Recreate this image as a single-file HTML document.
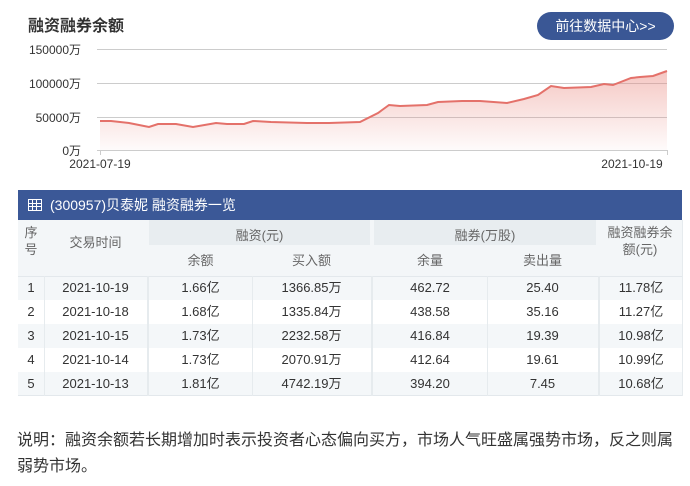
<!DOCTYPE html>
<html><head><meta charset="utf-8"><style>
*{margin:0;padding:0;box-sizing:border-box}
body{width:690px;height:486px;background:#fff;font-family:"Liberation Sans","Noto Sans CJK SC",sans-serif;color:#333;position:relative;overflow:hidden}
.title{position:absolute;left:28px;top:12px;font-size:16px;font-weight:bold;color:#333}
.btn{position:absolute;left:537px;top:12px;width:137px;height:28px;border-radius:14px;background:#3a5795;color:#fff;font-size:14px;line-height:28px;text-align:center}
svg{position:absolute;left:0;top:0}
.bar{position:absolute;left:18px;top:190px;width:664px;height:30px;background:#3b5897;color:#fff;font-size:14px;line-height:30px;padding-left:32px}
.ico{position:absolute;left:10px;top:9px;width:14px;height:12px;border:1.5px solid #fff;background:
linear-gradient(#fff,#fff) 0 3px/100% 1px no-repeat,linear-gradient(#fff,#fff) 0 6px/100% 1px no-repeat,
linear-gradient(#fff,#fff) 3px 0/1px 100% no-repeat,linear-gradient(#fff,#fff) 7px 0/1px 100% no-repeat}
.c{position:absolute;font-size:13px;text-align:center;color:#333}
.h{color:#666}
</style></head><body>
<div class="title">融资融券余额</div>
<div class="btn">前往数据中心&gt;&gt;</div>
<svg width="690" height="186">
<defs><linearGradient id="g" x1="0" y1="0" x2="0" y2="1"><stop offset="0" stop-color="#e8837a" stop-opacity=".45"/><stop offset="1" stop-color="#e8837a" stop-opacity=".03"/></linearGradient></defs>
<g stroke="#ccc" stroke-width="1"><line x1="97" y1="49.5" x2="667" y2="49.5"/><line x1="97" y1="83.5" x2="667" y2="83.5"/><line x1="97" y1="117.5" x2="667" y2="117.5"/><line x1="97" y1="150.5" x2="667" y2="150.5"/>
<line x1="100.5" y1="150" x2="100.5" y2="155"/><line x1="667.5" y1="150" x2="667.5" y2="155"/></g>
<g font-size="12" fill="#333" text-anchor="end"><text x="81" y="54">150000万</text><text x="81" y="88">100000万</text><text x="81" y="122">50000万</text><text x="81" y="155">0万</text></g>
<g font-size="12" fill="#333" text-anchor="middle"><text x="100" y="168">2021-07-19</text><text x="632" y="168">2021-10-19</text></g>
<path d="M100,121 L111,121 129,123 149,127 158,124 176,124 193,127 216,123 227,124 244,124 253,121 271,122 307,123 329,123 360,122 378,113 389,105 400,106 427,105 438,102 462,101 480,101 507,103 524,99 538,95 551,86 564,88 591,87 604,84 613,85 631,78 640,77 653,76 667,71 L667,150 L100,150Z" fill="url(#g)"/>
<path d="M100,121 L111,121 129,123 149,127 158,124 176,124 193,127 216,123 227,124 244,124 253,121 271,122 307,123 329,123 360,122 378,113 389,105 400,106 427,105 438,102 462,101 480,101 507,103 524,99 538,95 551,86 564,88 591,87 604,84 613,85 631,78 640,77 653,76 667,71" fill="none" stroke="#e4716a" stroke-width="2"/>
</svg>
<div class="bar"><span class="ico"></span>(300957)贝泰妮 融资融券一览</div>
<div style="position:absolute;left:18px;top:220px;width:664px;height:56px;background:#f3f6f8"></div>
<div style="position:absolute;left:149px;top:220px;width:221px;height:25px;background:#e8edf0"></div>
<div style="position:absolute;left:374px;top:220px;width:222px;height:25px;background:#e8edf0"></div>
<div style="position:absolute;left:18px;top:276px;width:664px;height:24px;background:#f4f7f9"></div>
<div style="position:absolute;left:18px;top:324px;width:664px;height:24px;background:#f4f7f9"></div>
<div style="position:absolute;left:18px;top:372px;width:664px;height:24px;background:#f4f7f9"></div>
<div style="position:absolute;left:18px;top:276px;width:664px;height:1px;background:#e3e8ec"></div>
<div style="position:absolute;left:18px;top:395px;width:664px;height:1px;background:#e3e8ec"></div>
<div style="position:absolute;left:44px;top:276px;width:1px;height:120px;background:#e6ebee"></div>
<div style="position:absolute;left:147px;top:276px;width:2px;height:120px;background:#e6ebee"></div>
<div style="position:absolute;left:252px;top:276px;width:1px;height:120px;background:#e6ebee"></div>
<div style="position:absolute;left:371px;top:276px;width:2px;height:120px;background:#e6ebee"></div>
<div style="position:absolute;left:487px;top:276px;width:1px;height:120px;background:#e6ebee"></div>
<div style="position:absolute;left:598px;top:276px;width:2px;height:120px;background:#e6ebee"></div>
<div style="position:absolute;left:682px;top:220px;width:1px;height:176px;background:#e6ebee"></div>
<div class="c h" style="left:18px;top:224px;width:26px;line-height:17px">序<br>号</div>
<div class="c h" style="left:44px;top:232px;width:103px">交易时间</div>
<div class="c h" style="left:149px;top:225px;width:221px">融资(元)</div>
<div class="c h" style="left:374px;top:225px;width:222px">融券(万股)</div>
<div class="c h" style="left:598px;top:224px;width:84px;line-height:17px">融资融券余<br>额(元)</div>
<div class="c h" style="left:149px;top:250px;width:103px">余额</div>
<div class="c h" style="left:252px;top:250px;width:119px">买入额</div>
<div class="c h" style="left:373px;top:250px;width:114px">余量</div>
<div class="c h" style="left:487px;top:250px;width:111px">卖出量</div>
<div style="position:absolute;left:17px;top:428px;width:690px;font-size:16px;line-height:26px;letter-spacing:0;color:#333;white-space:nowrap">说明：融资余额若长期增加时表示投资者心态偏向买方，市场人气旺盛属强势市场，反之则属<br>弱势市场。</div>
<div class="c" style="left:18px;width:26px;line-height:24px;top:276px">1<br>2<br>3<br>4<br>5</div>
<div class="c" style="left:44px;top:276px;width:103px;line-height:24px">2021-10-19<br>2021-10-18<br>2021-10-15<br>2021-10-14<br>2021-10-13</div>
<div class="c" style="left:149px;top:276px;width:103px;line-height:24px">1.66亿<br>1.68亿<br>1.73亿<br>1.73亿<br>1.81亿</div>
<div class="c" style="left:252px;top:276px;width:119px;line-height:24px">1366.85万<br>1335.84万<br>2232.58万<br>2070.91万<br>4742.19万</div>
<div class="c" style="left:373px;top:276px;width:114px;line-height:24px">462.72<br>438.58<br>416.84<br>412.64<br>394.20</div>
<div class="c" style="left:487px;top:276px;width:111px;line-height:24px">25.40<br>35.16<br>19.39<br>19.61<br>7.45</div>
<div class="c" style="left:600px;top:276px;width:82px;line-height:24px">11.78亿<br>11.27亿<br>10.98亿<br>10.99亿<br>10.68亿</div>
</body></html>
